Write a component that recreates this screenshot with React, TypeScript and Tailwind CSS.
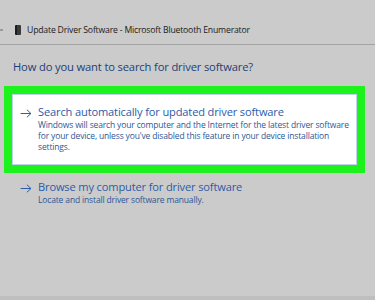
import React from 'react';

const Arrow: React.FC<{ className?: string }> = ({ className }) => (
  <svg viewBox="0 0 13 10" width="12" height="9" fill="none" stroke="currentColor" strokeWidth="1.1" className={className}>
    <path d="M0.5 5h11.5M7.5 0.8L12 5l-4.5 4.2" />
  </svg>
);

const App: React.FC = () => {
  return (
    <div className="w-[375px] h-[300px] bg-[#cbcbcb] flex flex-col overflow-hidden" style={{ fontFamily: '"Open Sans", "Noto Sans", sans-serif' }}>
      {/* title row */}
      <div className="h-[45px] flex items-end pb-[8px] border-b border-[#a3a3a3]">
        <div className="w-[3px] h-[2px] bg-[#9a9a9a] mb-[5px] mr-[12px]" />
        <div className="w-[6px] h-[10px] bg-[#3a3a3a] rounded-[1px] mr-[6px] mb-[1px] border-l-2 border-[#1c1c1c]" />
        <span className="text-[8.7px] leading-[12px] tracking-[-0.2px] text-[#1a1a1a]">
          Update Driver Software - Microsoft Bluetooth Enumerator
        </span>
      </div>

      <div className="pl-[13px] pt-[14px] h-[41px]">
        <h1 className="text-[11.2px] leading-[16px] tracking-[-0.15px] text-[#21407a]">
          How do you want to search for driver software?
        </h1>
      </div>

      {/* highlighted option */}
      <div className="mx-[4px] w-[361px] h-[87px] bg-[#1df21d] p-[8px]">
        <div className="h-full bg-white border border-[#bcd4ee] flex pl-[7px] pt-[9px]">
          <Arrow className="text-[#2c5ba6] mt-[5px] shrink-0" />
          <div className="pl-[6px]">
            <div className="text-[11.1px] leading-[15px] tracking-[-0.15px] text-[#2b5ba9]">
              Search automatically for updated driver software
            </div>
            <div className="text-[8.5px] leading-[11px] tracking-[-0.15px] text-[#2d5797] w-[315px]">
              Windows will search your computer and the Internet for the latest driver software for your device, unless you've disabled this feature in your device installation settings.
            </div>
          </div>
        </div>
      </div>

      {/* second option */}
      <div className="flex pl-[20px] pt-[6px]">
        <Arrow className="text-[#2c5ba6] mt-[5px] shrink-0" />
        <div className="pl-[6px]">
          <div className="text-[11.1px] leading-[15px] tracking-[-0.15px] text-[#2b5ba9]">
            Browse my computer for driver software
          </div>
          <div className="text-[8.5px] leading-[11px] tracking-[-0.15px] text-[#2d5797]">
            Locate and install driver software manually.
          </div>
        </div>
      </div>

      <div className="flex-1" />
      <div className="h-[4px] bg-[#bfbfbf]" />
    </div>
  );
};

export default App;
